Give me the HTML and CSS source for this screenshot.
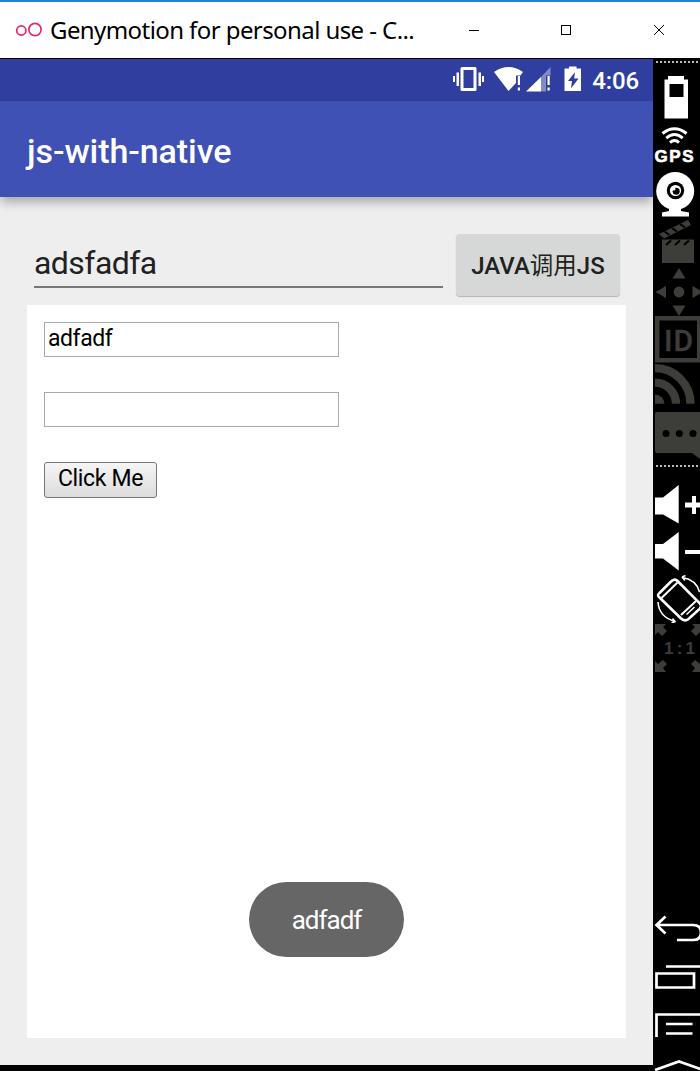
FILE: index.html
```html
<!DOCTYPE html>
<html lang="en">
<head>
<meta charset="utf-8">
<title>Genymotion</title>
<link rel="stylesheet" href="styles.css">
</head>
<body>
<div class="window">
  <header class="titlebar">
    <svg class="logo" viewBox="15 20 28 18"><g fill="none" stroke="#e6286a" stroke-width="1.700"><circle cx="21.3" cy="29.500" r="4.6"/><circle cx="35" cy="28.500" r="6.1"/></g></svg>
    <span class="title">Genymotion for personal use - C...</span>
    <div class="controls">
      <svg class="control" viewBox="0 0 10 10"><path d="M0 5.5H10" stroke="#000"/></svg>
      <svg class="control" viewBox="0 0 10 10"><path d="M.5.5h9v9h-9z" fill="none" stroke="#000"/></svg>
      <svg class="control last" viewBox="0 0 10 10"><path d="M0 0L10 10M10 0L0 10" stroke="#000"/></svg>
    </div>
  </header>
  <div class="main">
    <div class="device">
      <div class="statusbar">
        <svg class="status-icons" viewBox="452 65 132 32">
          <g fill="#fff">
            <path fill-rule="evenodd" d="M462 68h13q1.500 0 1.500 1.500v21q0 1.500-1.500 1.500h-13q-1.500 0-1.500-1.500v-21q0-1.500 1.500-1.500zM463.500 71v18h10v-18z"/>
            <path d="M456.500 73.500h2.500v13.500h-2.500zM453 77h2v6h-2zM478.500 73.500h2.500v13.500h-2.500zM482 77h2v6h-2z"/>
            <path d="M494 73Q508.500 63 523 73L520.500 76.500H516V84L508.500 92z"/>
            <path d="M517.800 77h2.200v9h-2.200zM517.800 88.500h2.200v3h-2.200z"/>
            <path opacity=".4" d="M541 78L550.500 68V76.500H546V92.500H541z"/>
            <path d="M526 92.500L541 78v14.500zM547.500 77h2.200v9h-2.200zM547.500 88.500h2.200v3h-2.200z"/>
            <path d="M569 67.500h7.500v2h4.500v22.500h-16.500v-22.500h4.500z"/>
          </g>
          <path fill="#303f9f" d="M575 73L568 82h4l-1 7.500 7.500-10h-4.300z"/>
        </svg>
        <span class="clock">4:06</span>
      </div>
      <div class="appbar">js-with-native</div>
      <div class="content">
        <div class="row">
          <div class="edit">adsfadfa</div>
          <div class="java-button">JAVA<span class="cjk">调用</span>JS</div>
        </div>
        <div class="webview">
          <div class="field">adfadf</div>
          <div class="field"></div>
          <div class="click-button">Click Me</div>
        </div>
      </div>
      <div class="toast">adfadf</div>
    </div>
    <aside class="sidebar">
      <svg class="icon h-dots" viewBox="653 59 47 6"><path d="M656 62h44" stroke="#bbb" stroke-width="2" stroke-dasharray="2 2"/></svg>
      <svg class="icon h-battery" viewBox="653 65 47 57"><path fill="#fff" fill-rule="evenodd" d="M668 76h16v3.500h4V118.500h-23.500V79.500h3.500zM669.500 84v13h14V84z"/></svg>
      <svg class="icon h-gps" viewBox="653 122 47 46"><g fill="none" stroke="#fff" stroke-width="2.900"><path d="M662.500 133.500Q674.500 124 686.500 133.500M666.300 138.200Q674.500 131 682.700 138.200M670 142.600Q674.500 138.500 679 142.600"/></g><text class="gps" x="654.500" y="162" textLength="39">GPS</text></svg>
      <svg class="icon h-camera" viewBox="653 168 47 50"><g fill="#fff"><circle cx="675.200" cy="191" r="19"/><path d="M669 207h12v4l8 1.500v4h-27v-4l7-1.500z"/></g><circle cx="675.500" cy="190.500" r="8.700"/><circle cx="675.500" cy="190.500" r="5.600" fill="#fff"/><circle cx="676.200" cy="191.200" r="3.500"/><circle cx="674" cy="189" r="1.500" fill="#fff"/></svg>
      <svg class="icon h-clapper" viewBox="653 218 47 48"><g fill="#3d3d39"><path d="M659 234l29-14 3 5-27 13.500z"/><path d="M662 239.500h32V263h-32z"/></g><path stroke="#000" stroke-width="2" d="M664.500 231.500l5 3.500M672 228l5 3.500M680 224l5 3.500M666 245l5-4.500M675 245l5-4.500M684 245l5-4.500"/></svg>
      <svg class="icon h-pad" viewBox="653 266 47 50"><g fill="#3d3d39"><path d="M679 268l6.500 10.500h-13zM679 316l6.500-10.500h-13zM655.500 292l10.500-6v12zM703 292l-10.500-6v12z"/><circle cx="679" cy="292" r="5.400"/></g></svg>
      <svg class="icon h-id" viewBox="653 316 47 47"><path fill="none" stroke="#3d3d39" stroke-width="4.500" d="M657.200 318.200h42v42h-42z"/><text class="id" x="664" y="350.800" textLength="29">ID</text></svg>
      <svg class="icon h-cast" viewBox="653 363 47 44"><g fill="none" stroke="#3d3d39" stroke-width="8.300"><path d="M655 368.200a35.500 35.500 0 0 1 35.500 35.500M655 382.700a21 21 0 0 1 21 21"/></g><path fill="#3d3d39" d="M655 394.500a9.500 9.500 0 0 1 9.500 9.200H655z"/></svg>
      <svg class="icon h-message" viewBox="653 407 47 54"><path fill="#3d3d39" d="M657 412h43v47l-8-6h-35q-2 0-2-2v-37q0-2 2-2z"/><circle cx="666" cy="433.500" r="3.500"/><circle cx="679.300" cy="433.500" r="3.500"/><circle cx="693" cy="433.500" r="3.500"/></svg>
      <svg class="icon h-divider" viewBox="653 461 47 20"><path d="M656 466h44" stroke="#bbb" stroke-width="2" stroke-dasharray="2 2"/></svg>
      <svg class="icon h-volume" viewBox="653 481 47 47"><path fill="#fff" d="M655 497.500h8l15.700-12.500v38.500L663 514.500h-8zM685 502.500h7v-6.500h4v6.500h6v5h-6v6.500h-4v-6.500h-7z"/></svg>
      <svg class="icon h-volume" viewBox="653 528 47 47"><path fill="#fff" d="M655 544h8l15.700-12v38.500L663 558.500h-8zM685 550h16v4h-16z"/></svg>
      <svg class="icon h-rotate" viewBox="653 575 47 48"><g fill="none" stroke="#fff" stroke-width="2.600"><path d="M659.500 593l11-11q4-4 7-1l22 22q3 3 0 6l-11 10q-4 3-8-1l-21.500-21q-2-2 .5-4z"/><path stroke-width="2" d="M661.500 598l16-15.500M681 615l15-14"/><path stroke-width="1.500" d="M686.500 614.500l8-7.500M658 602q1 15 17 19.500M675.500 622l-3-3.500M675.500 621.500l-4 1.500M699.500 592q-3-12-17-14.500M682 577l3.500-1.500M682 577l3 3.500"/></g></svg>
      <svg class="icon h-scale" viewBox="653 623 47 49"><path fill="#3d3d39" d="M655 624h11l-3 3 4 4-5 5-4-4-3 3zM703 624h-11l3 3-4 4 5 5 4-4 3 3zM655 672v-11l3 3 5-4 4 4-4 4 3 4zM703 672v-11l-3 3-5-4-4 4 4 4-3 4z"/><text class="scale" x="664" y="654" textLength="31">1 : 1</text></svg>
      <svg class="icon h-nav" viewBox="653 910 47 161"><g fill="none" stroke="#fff" stroke-width="2.700"><path d="M665.500 916.500L656.500 925l9 8.500M657 925h36q8 0 8 7.500t-8 7.500h-16M666 966.500h35M656.500 973.500h37.500v14h-37.500zM656.500 1037v-22.500H701M666 1024h26.500M666 1033.500h26.500M655 1070l24-8.500 24 8.500"/></g></svg>
    </aside>
  </div>
</div>
</body>
</html>
```
FILE: styles.css
```css
body { margin: 0; font-family: Roboto, "Noto Sans CJK SC", sans-serif; }
.window { width: 700px; height: 1071px; display: flex; flex-direction: column; background: #000; overflow: hidden; }
.titlebar { box-sizing: border-box; height: 58px; border-top: 2px solid #1e82d8; background: #fff; display: flex; align-items: center; padding: 0 36px 0 15px; }
.logo { width: 28px; height: 18px; }
.title { margin-left: 7px; font: 24px "Noto Sans", sans-serif; letter-spacing: -.58px; white-space: nowrap; line-height: 30px; }
.controls { margin-left: auto; display: flex; gap: 82px; margin-top: -1px; }
.control { width: 10px; height: 10px; shape-rendering: crispEdges; }
.last { margin-left: 1px; }
.main { flex: 1; display: flex; margin-top: 1px; }
.device { position: relative; width: 653px; height: 1006px; background: #eee; display: flex; flex-direction: column; overflow: hidden; }
.statusbar { box-sizing: border-box; height: 42px; background: #303f9f; display: flex; align-items: center; justify-content: flex-end; padding-right: 14px; color: #fff; }
.status-icons { width: 132px; height: 32px; margin-right: 8px; }
.clock { font-size: 24px; font-weight: 500; padding-top: 2px; letter-spacing: -.1px; }
.appbar { box-sizing: border-box; height: 96px; padding: 3px 27px 0; display: flex; align-items: center; background: #3f51b5; color: #fff; font-size: 34px; font-weight: 500; letter-spacing: -.07px; box-shadow: 0 6px 10px -1px rgba(0,0,0,.3); }
.content { flex: 1; padding: 37px 27px 27px; display: flex; flex-direction: column; }
.row { display: flex; height: 71px; padding: 0 6px 0 7px; gap: 13px; }
.edit { box-sizing: border-box; width: 409px; height: 54px; border-bottom: 2px solid #777; font-size: 32px; line-height: 59px; letter-spacing: -.55px; color: #212121; }
.java-button { width: 164px; height: 62px; border-radius: 4px; background: #d6d8d7; box-shadow: 0 1px 1px rgba(0,0,0,.25); color: #212121; font-size: 24px; font-weight: 500; line-height: 64px; text-align: center; white-space: nowrap; }
.cjk { font-weight: 400; font-size: 23.500px; }
.webview { flex: 1; background: #fff; padding: 17px; display: flex; flex-direction: column; align-items: flex-start; gap: 35px; }
.field { box-sizing: border-box; width: 295px; height: 35px; border: 1px solid #a9a9a9; padding-left: 3px; font-size: 23px; line-height: 31px; letter-spacing: -.45px; }
.click-button { box-sizing: border-box; width: 113px; height: 36px; border: 1.500px solid #777; border-radius: 3px; background: linear-gradient(#f5f5f5, #dcdcdc); font-size: 23px; line-height: 31px; letter-spacing: -.35px; text-align: center; }
.toast { position: absolute; left: 249px; top: 823px; width: 155px; height: 75px; border-radius: 38px; background: #666; color: #fff; font-size: 26px; letter-spacing: -1px; line-height: 76px; text-align: center; }
.sidebar { width: 47px; height: 1012px; display: flex; flex-direction: column; background: #000; }
.icon { display: block; width: 47px; flex: none; }
.h-dots { height: 6px; shape-rendering: crispEdges; }
.h-battery { height: 57px; }
.h-gps { height: 46px; }
.h-camera { height: 50px; }
.h-clapper { height: 48px; }
.h-pad { height: 50px; }
.h-id { height: 47px; }
.h-cast { height: 44px; }
.h-message { height: 54px; }
.h-divider { height: 20px; shape-rendering: crispEdges; }
.h-volume { height: 47px; }
.h-rotate { height: 48px; }
.h-scale { height: 49px; }
.h-nav { height: 161px; margin-top: auto; }
.gps { font: 900 17px "Liberation Sans", sans-serif; fill: #fff; stroke: #fff; stroke-width: .6px; }
.id { font: 500 30px Roboto, sans-serif; fill: #3d3d39; stroke: #3d3d39; stroke-width: .4px; }
.scale { font: 700 17px "Liberation Sans", sans-serif; fill: #3d3d39; }
```
